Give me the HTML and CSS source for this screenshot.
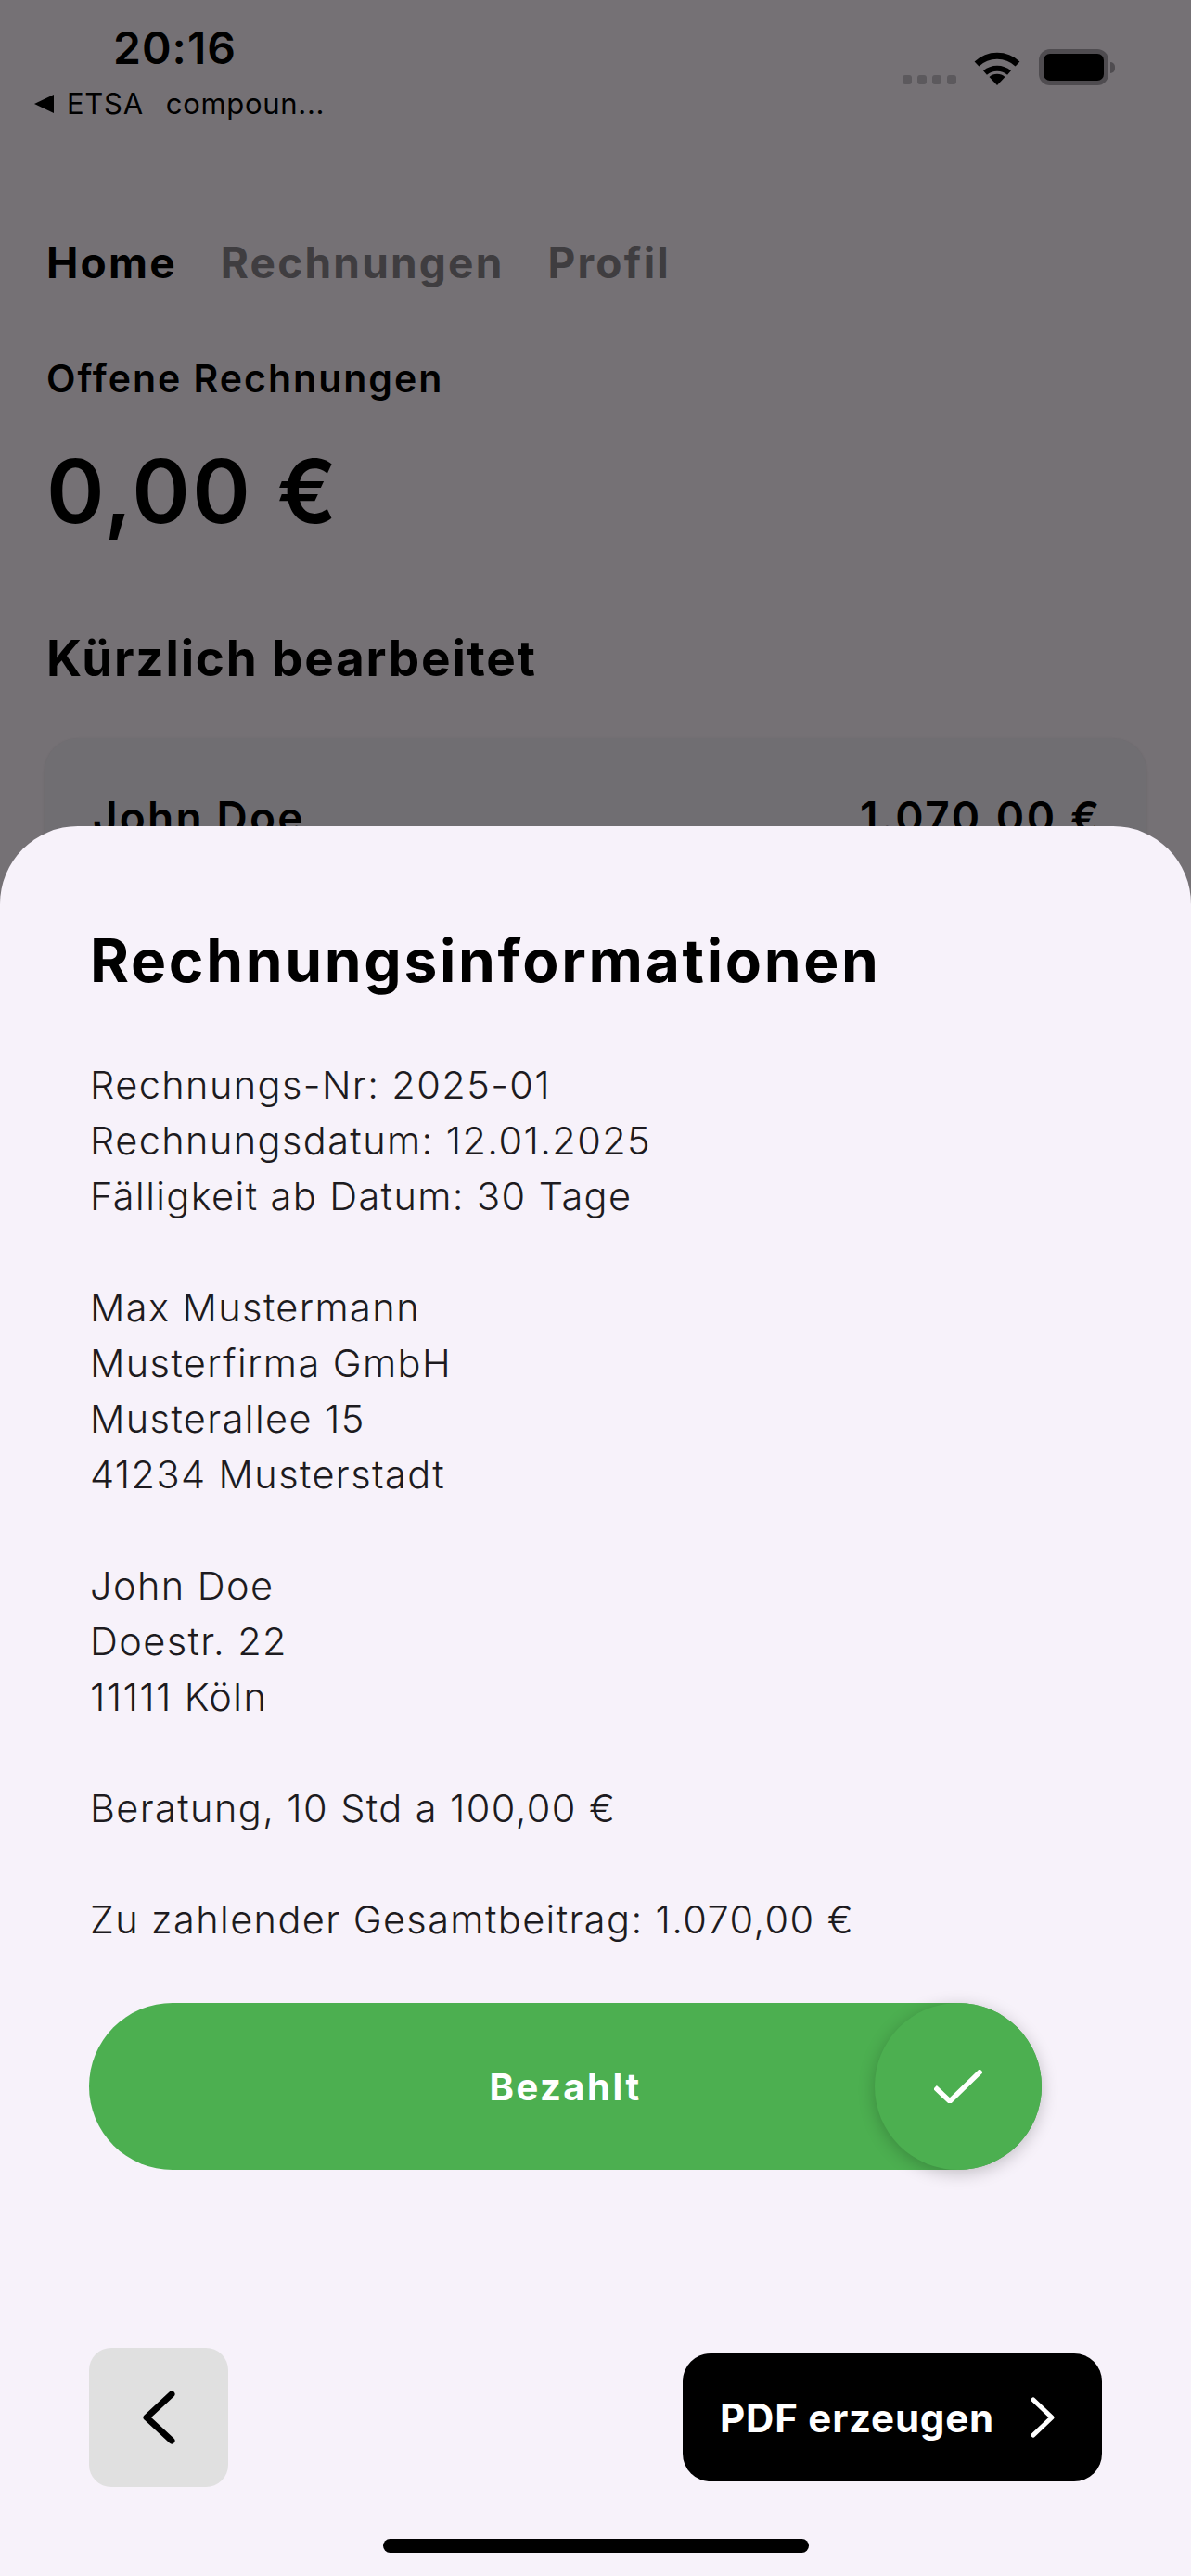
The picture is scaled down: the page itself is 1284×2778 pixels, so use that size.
FILE: index.html
```html
<!DOCTYPE html>
<html lang="de">
<head>
  <meta charset="UTF-8" />
  <meta name="viewport" content="width=device-width, initial-scale=1.0"/>
  <title>Rechnungsinformationen</title>
  <link rel="stylesheet" href="styles.css">
</head>
<body>
  <div class="screen">
    <header class="status-bar">
      <div class="status-left">
        <div class="time">20:16</div>
        <div class="back-app">
          <span class="back-arrow"></span>
          <span>ETSA</span>
          <span class="back-name">compoun...</span>
        </div>
      </div>
      <div class="status-right">
        <div class="signal"><i></i><i></i><i></i><i></i></div>
        <svg class="wifi" viewBox="0 0 50 37" width="50" height="37">
          <path d="M3 14 A32 32 0 0 1 47 14" fill="none" stroke="#000" stroke-width="7"/>
          <path d="M12 23.5 A20 20 0 0 1 38 23.5" fill="none" stroke="#000" stroke-width="6"/>
          <path d="M25 37 L16.5 28 A13 13 0 0 1 33.5 28 Z" fill="#000"/>
        </svg>
        <div class="battery"><div class="battery-level"></div></div>
        <div class="battery-nub"></div>
      </div>
    </header>

    <nav class="tabs">
      <span class="tab active">Home</span>
      <span class="tab">Rechnungen</span>
      <span class="tab">Profil</span>
    </nav>

    <main class="home">
      <h2 class="open-label">Offene Rechnungen</h2>
      <div class="open-amount">0,00 €</div>
      <h2 class="recent-title">Kürzlich bearbeitet</h2>
      <div class="recent-card">
        <span>John Doe</span>
        <span class="recent-amount">1.070,00 €</span>
      </div>
    </main>

    <section class="sheet">
      <h1 class="sheet-title">Rechnungsinformationen</h1>

      <div class="invoice">
        <p>Rechnungs-Nr: 2025-01<br>Rechnungsdatum: 12.01.2025<br>Fälligkeit ab Datum: 30 Tage</p>
        <p>Max Mustermann<br>Musterfirma GmbH<br>Musterallee 15<br>41234 Musterstadt</p>
        <p>John Doe<br>Doestr. 22<br>11111 Köln</p>
        <p>Beratung, 10 Std a 100,00 €</p>
        <p>Zu zahlender Gesamtbeitrag: 1.070,00 €</p>
      </div>

      <div class="paid-slider">
        <span class="paid-label">Bezahlt</span>
        <div class="paid-knob">
          <svg viewBox="0 0 52 36" width="52" height="36">
            <path d="M1 19 L17 34 L51 1" fill="none" stroke="#fff" stroke-width="5.5"/>
          </svg>
        </div>
      </div>

      <div class="sheet-actions">
        <button class="btn-back">
          <svg viewBox="0 0 36 58" width="36" height="58">
            <path d="M32 4 L5 29 L32 54" fill="none" stroke="#000" stroke-width="7" stroke-linecap="round" stroke-linejoin="round"/>
          </svg>
        </button>
        <button class="btn-pdf">
          <span>PDF erzeugen</span>
          <svg viewBox="0 0 26 44" width="26" height="44">
            <path d="M3 3 L23 22 L3 41" fill="none" stroke="#fff" stroke-width="5" stroke-linecap="round" stroke-linejoin="round"/>
          </svg>
        </button>
      </div>

      <div class="home-indicator"></div>
    </section>
  </div>
</body>
</html>
```

FILE: styles.css
```css
* {
  box-sizing: border-box;
}

body {
  margin: 0;
  font-family: Inter, 'Liberation Sans', sans-serif;
  color: #000;
}

.screen {
  position: relative;
  width: 1284px;
  height: 2778px;
  overflow: hidden;
  background-color: #757175;
}

/* status bar */
.status-bar {
  display: flex;
  justify-content: space-between;
  height: 266px;
  padding: 30px 82px 0 37px;
}

.status-left {
  display: flex;
  flex-direction: column;
}

.time {
  margin-left: 85px;
  font-size: 48px;
  line-height: 44px;
  font-weight: 600;
  letter-spacing: 1px;
}

.back-app {
  display: flex;
  align-items: center;
  margin-top: 18px;
  font-size: 31px;
  line-height: 40px;
  letter-spacing: 0.7px;
}

.back-arrow {
  width: 0;
  height: 0;
  margin-right: 14px;
  border-top: 10px solid transparent;
  border-bottom: 10px solid transparent;
  border-right: 21px solid #000;
}

.back-name {
  margin-left: 24px;
}

.status-right {
  display: flex;
  align-items: flex-end;
  height: 62px;
}

.signal {
  display: flex;
  gap: 6px;
  margin-right: 19px;
  margin-bottom: 1px;
}

.signal i {
  width: 10px;
  height: 10px;
  border-radius: 3px;
  background-color: #5c595d;
}

.wifi {
  margin-right: 20px;
}

.battery {
  width: 75px;
  height: 39px;
  padding: 5px;
  border-radius: 12px;
  background-color: #4f4c50;
}

.battery-level {
  height: 100%;
  border-radius: 7px;
  background-color: #000;
}

.battery-nub {
  width: 5px;
  height: 12px;
  margin: 0 0 13px 2px;
  border-radius: 0 6px 6px 0;
  background-color: #4f4c50;
}

/* home page behind the sheet */
.tabs {
  display: flex;
  gap: 47px;
  padding-left: 50px;
  font-size: 46px;
  line-height: 34px;
  font-weight: 700;
  letter-spacing: 2.2px;
  color: #3f3d40;
}

.tab.active {
  color: #000;
}

.home {
  padding: 0 48px 0 50px;
}

.open-label {
  margin: 93px 0 0;
  font-size: 41px;
  line-height: 30px;
  font-weight: 600;
  letter-spacing: 2px;
}

.open-amount {
  margin-top: 72px;
  font-size: 95px;
  line-height: 70px;
  font-weight: 600;
  letter-spacing: 2.3px;
}

.recent-title {
  margin: 127px 0 0;
  font-size: 53px;
  line-height: 37px;
  font-weight: 700;
  letter-spacing: 1.8px;
}

.recent-card {
  display: flex;
  justify-content: space-between;
  margin: 67px 0 0 -2px;
  padding: 68px 48px 0 52px;
  height: 300px;
  border-radius: 36px;
  background-color: #706e72;
  box-shadow: 0 1px 3px rgba(0, 0, 0, 0.1);
  font-size: 46px;
  line-height: 34px;
  font-weight: 600;
  letter-spacing: 2.2px;
}

.recent-amount {
  letter-spacing: 2.7px;
}

/* bottom sheet */
.sheet {
  position: absolute;
  top: 891px;
  left: 0;
  right: 0;
  bottom: 0;
  display: flex;
  flex-direction: column;
  padding: 0 96px;
  border-radius: 84px 84px 0 0;
  background-color: #f7f2fa;
}

.sheet-title {
  margin: 122px 0 0 1px;
  font-size: 64px;
  line-height: 46px;
  font-weight: 700;
  letter-spacing: 2.7px;
}

.invoice {
  margin: 81px 0 0 1px;
  font-size: 41.5px;
  line-height: 60px;
  font-weight: 350;
  letter-spacing: 1.4px;
  color: #1d1b20;
}

.invoice p {
  margin: 0 0 60px;
}

.invoice p:last-child {
  margin-bottom: 0;
}

.paid-slider {
  position: relative;
  display: flex;
  align-items: center;
  justify-content: center;
  width: 1027px;
  height: 180px;
  margin-top: 60px;
  border-radius: 90px;
  background-color: #4caf50;
}

.paid-label {
  font-size: 40px;
  font-weight: 700;
  letter-spacing: 2.5px;
  color: #fff;
}

.paid-knob {
  position: absolute;
  top: 0;
  right: 0;
  display: flex;
  align-items: center;
  justify-content: center;
  width: 180px;
  height: 180px;
  border-radius: 50%;
  background-color: #4caf50;
  box-shadow: 0 4px 18px rgba(0, 0, 0, 0.22);
}

.sheet-actions {
  display: flex;
  align-items: center;
  justify-content: space-between;
  width: 1092px;
  margin-top: 192px;
}

button {
  display: flex;
  align-items: center;
  border: none;
  font-family: inherit;
}

.btn-back {
  justify-content: center;
  width: 150px;
  height: 150px;
  padding: 0;
  border-radius: 24px;
  background-color: #e0e0e0;
}

.btn-pdf {
  justify-content: space-between;
  width: 452px;
  height: 138px;
  padding: 0 51px 0 40px;
  border-radius: 30px;
  background-color: #000;
  color: #fff;
  font-size: 42px;
  font-weight: 700;
  letter-spacing: 0.8px;
}

.home-indicator {
  position: absolute;
  left: 413px;
  bottom: 25px;
  width: 459px;
  height: 15px;
  border-radius: 8px;
  background-color: #000;
}
```
